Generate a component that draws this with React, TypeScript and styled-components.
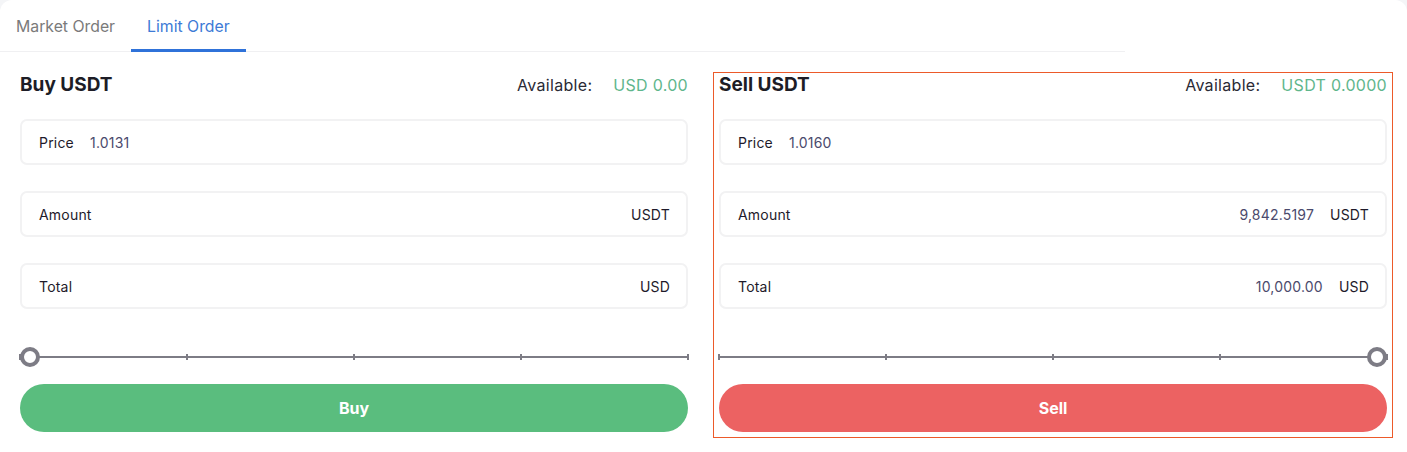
import React from "react";
import styled, { createGlobalStyle } from "styled-components";

const GlobalStyle = createGlobalStyle`
  html, body {
    margin: 0;
    padding: 0;
    background: #f4f5f7;
  }
  body {
    font-family: Inter, "Noto Sans", Arial, sans-serif;
  }
`;

const Card = styled.div`
  width: 1407px;
  height: 452px;
  background: #ffffff;
  border-radius: 12px 12px 0 0;
  box-sizing: border-box;
`;

const TabBar = styled.div`
  display: flex;
  width: 1125px;
  height: 52px;
  border-bottom: 1px solid #f0f0f2;
  box-sizing: border-box;
`;

const Tab = styled.div<{ $active?: boolean }>`
  display: flex;
  align-items: center;
  padding: 4px 16px 0;
  font-size: 15.8px;
  color: ${(p) => (p.$active ? "#3d7ad6" : "#7a7a7a")};
  border-bottom: 3px solid ${(p) => (p.$active ? "#2f72d9" : "transparent")};
  margin-bottom: -1px;
`;

const Columns = styled.div`
  display: grid;
  grid-template-columns: 1fr 1fr;
  column-gap: 19px;
  padding: 20px 14px 0;
`;

const Panel = styled.div<{ $selected?: boolean }>`
  border: 1px solid ${(p) => (p.$selected ? "#ec5a2a" : "transparent")};
  padding: 0 5px 5px;
  display: flex;
  flex-direction: column;
`;

const Header = styled.div`
  height: 23px;
  display: flex;
  align-items: center;
  margin-bottom: 23px;
`;

const Title = styled.div`
  font-size: 19px;
  font-weight: 700;
  color: #1d1d26;
  flex: 1;
`;

const AvailLabel = styled.span`
  font-size: 16px;
  letter-spacing: 0.3px;
  color: #2a2a35;
  margin-right: 21px;
`;

const AvailValue = styled.span`
  font-size: 16px;
  letter-spacing: 0.3px;
  color: #5fb68c;
`;

const Field = styled.div`
  height: 46px;
  box-sizing: border-box;
  border: 2px solid #f2f2f3;
  border-radius: 7px;
  display: flex;
  align-items: center;
  padding: 0 16px 0 17px;
  margin-bottom: 26px;
  font-size: 14px;
  letter-spacing: 0.2px;
`;

const FieldLabel = styled.span`
  color: #1e1a2a;
  margin-right: 16px;
`;

const FieldValue = styled.span<{ $right?: boolean }>`
  color: #4b4a6c;
  margin-left: ${(p) => (p.$right ? "auto" : "0")};
`;

const Unit = styled.span<{ $pushed?: boolean }>`
  color: #1e1a2a;
  margin-left: ${(p) => (p.$pushed ? "16px" : "auto")};
`;

const SliderWrap = styled.div`
  position: relative;
  height: 20px;
  margin: 12px 0 17px;
`;

const Track = styled.div`
  position: absolute;
  left: 0;
  right: 0;
  top: 9px;
  height: 2px;
  background: #7d7c85;
`;

const Tick = styled.div`
  position: absolute;
  top: 7px;
  width: 2px;
  height: 6px;
  margin-left: -1px;
  background: #7d7c85;
`;

const Knob = styled.div`
  position: absolute;
  top: 0;
  width: 20px;
  height: 20px;
  box-sizing: border-box;
  border: 4px solid #7d7c85;
  border-radius: 50%;
  background: #ffffff;
  margin-left: -10px;
`;

const ActionButton = styled.button<{ $variant: "buy" | "sell" }>`
  height: 48px;
  border: none;
  border-radius: 24px;
  background: ${(p) => (p.$variant === "buy" ? "#5abd7e" : "#ec6262")};
  color: #ffffff;
  font-family: inherit;
  font-size: 16px;
  font-weight: 700;
  cursor: pointer;
`;

function Slider({ value }: { value: number }) {
  const marks = [0, 25, 50, 75, 100];
  return (
    <SliderWrap>
      <Track />
      {marks.map((m) => (
        <Tick key={m} style={{ left: `${m}%` }} />
      ))}
      <Knob style={{ left: `calc(${value}% + ${value === 0 ? 10 : -10}px)` }} />
    </SliderWrap>
  );
}

type Row = { label: string; value?: string; unit?: string; inline?: boolean };

function OrderPanel({
  title,
  avail,
  rows,
  variant,
  percent,
  selected,
}: {
  title: string;
  avail: string;
  rows: Row[];
  variant: "buy" | "sell";
  percent: number;
  selected?: boolean;
}) {
  return (
    <Panel $selected={selected}>
      <Header>
        <Title>{title}</Title>
        <AvailLabel>Available:</AvailLabel>
        <AvailValue>{avail}</AvailValue>
      </Header>
      {rows.map((r) => (
        <Field key={r.label}>
          <FieldLabel>{r.label}</FieldLabel>
          {r.value && <FieldValue $right={!r.inline}>{r.value}</FieldValue>}
          {r.unit && <Unit $pushed={!!r.value}>{r.unit}</Unit>}
        </Field>
      ))}
      <Slider value={percent} />
      <ActionButton $variant={variant}>{variant === "buy" ? "Buy" : "Sell"}</ActionButton>
    </Panel>
  );
}

export default function App() {
  return (
    <>
      <GlobalStyle />
      <Card>
        <TabBar>
          <Tab>Market Order</Tab>
          <Tab $active>Limit Order</Tab>
        </TabBar>
        <Columns>
          <OrderPanel
            title="Buy USDT"
            avail="USD 0.00"
            variant="buy"
            percent={0}
            rows={[
              { label: "Price", value: "1.0131", inline: true },
              { label: "Amount", unit: "USDT" },
              { label: "Total", unit: "USD" },
            ]}
          />
          <OrderPanel
            title="Sell USDT"
            avail="USDT 0.0000"
            variant="sell"
            percent={100}
            selected
            rows={[
              { label: "Price", value: "1.0160", inline: true },
              { label: "Amount", value: "9,842.5197", unit: "USDT" },
              { label: "Total", value: "10,000.00", unit: "USD" },
            ]}
          />
        </Columns>
      </Card>
    </>
  );
}
